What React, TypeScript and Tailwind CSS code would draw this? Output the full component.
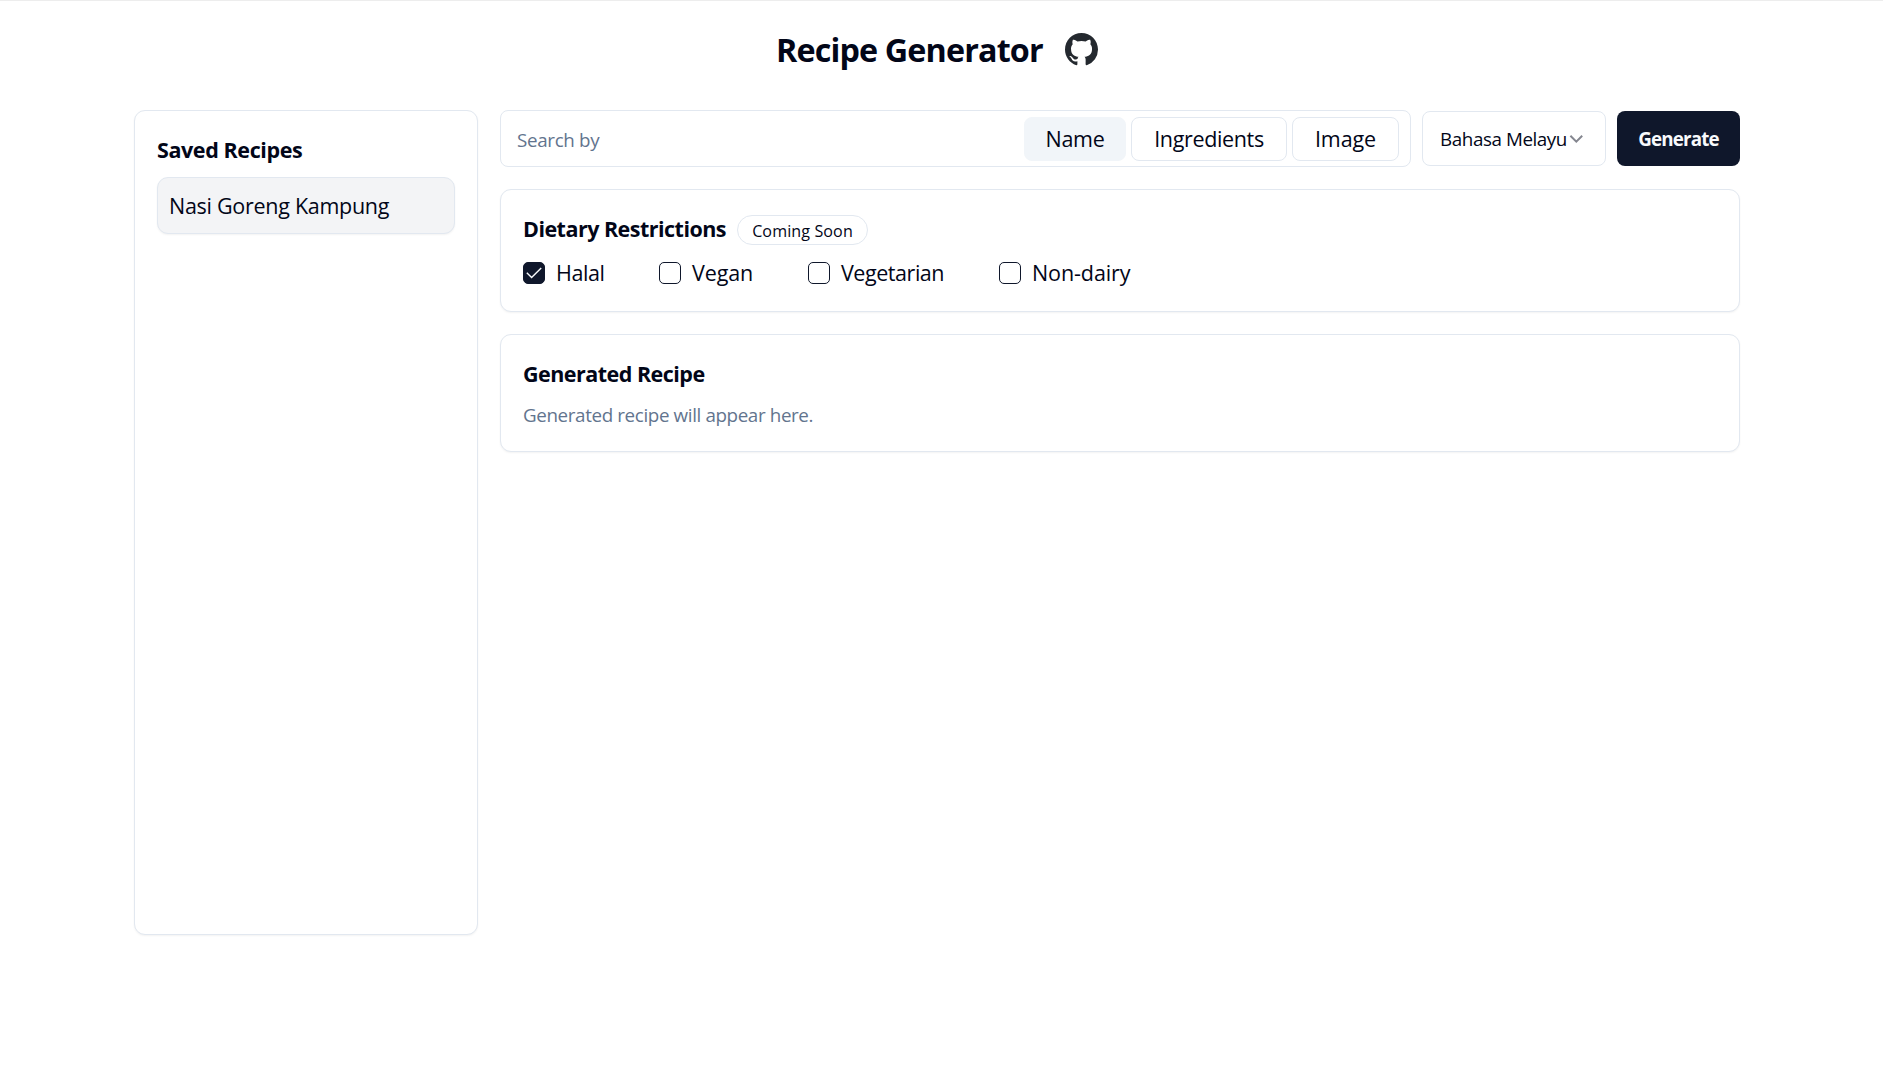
import type { ReactNode } from "react";

function GitHubMark() {
  return (
    <svg viewBox="0 0 16 16" className="h-[33px] w-[33px]" fill="#24292f" aria-label="GitHub">
      <path
        fillRule="evenodd"
        d="M8 0C3.58 0 0 3.58 0 8c0 3.54 2.29 6.53 5.47 7.59.4.07.55-.17.55-.38 0-.19-.01-.82-.01-1.49-2.01.37-2.53-.49-2.69-.94-.09-.23-.48-.94-.82-1.13-.28-.15-.68-.52-.01-.53.63-.01 1.08.58 1.23.82.72 1.21 1.87.87 2.33.66.07-.52.28-.87.51-1.07-1.78-.2-3.64-.89-3.64-3.95 0-.87.31-1.59.82-2.15-.08-.2-.36-1.02.08-2.12 0 0 .67-.21 2.2.82.64-.18 1.32-.27 2-.27s1.36.09 2 .27c1.53-1.04 2.2-.82 2.2-.82.44 1.1.16 1.92.08 2.12.51.56.82 1.27.82 2.15 0 3.07-1.87 3.75-3.65 3.95.29.25.54.73.54 1.48 0 1.07-.01 1.93-.01 2.2 0 .21.15.46.55.38A8.01 8.01 0 0 0 16 8c0-4.42-3.58-8-8-8z"
      />
    </svg>
  );
}

function Card({ className, children }: { className: string; children: ReactNode }) {
  return (
    <section className={`rounded-[11px] border border-slate-200 bg-white px-[22px] shadow-xs ${className}`}>
      {children}
    </section>
  );
}

const modes = [
  { label: "Name", className: "w-[102px] border-slate-100 bg-slate-100 tracking-[-0.27px]" },
  { label: "Ingredients", className: "w-[156px] border-slate-200 bg-white tracking-[-0.35px]" },
  { label: "Image", className: "w-[107px] border-slate-200 bg-white tracking-[-0.1px]" },
];

const diets = [
  { label: "Halal", checked: true, className: "w-[136px]", text: "tracking-[-0.4px]" },
  { label: "Vegan", checked: false, className: "w-[149px]", text: "tracking-[-0.1px]" },
  { label: "Vegetarian", checked: false, className: "w-[191px]", text: "tracking-[-0.45px]" },
  { label: "Non-dairy", checked: false, className: "w-[140px]", text: "tracking-[-0.1px]" },
];

function Checkbox({ checked }: { checked: boolean }) {
  return (
    <span
      className={`flex h-[22px] w-[22px] items-center justify-center rounded-[5px] border border-slate-900 ${
        checked ? "bg-slate-900" : "bg-white"
      }`}
    >
      {checked && (
        <svg viewBox="0 0 22 22" className="h-[22px] w-[22px] shrink-0" fill="none" stroke="#f8fafc" strokeWidth="1.4">
          <path d="M3.8 10.8 L8.6 15.6 L18.2 5.9" />
        </svg>
      )}
    </span>
  );
}

export default function App() {
  return (
    <div className="min-h-[1071px] border-t border-[#ededed] bg-white font-['Open_Sans','Noto_Sans',sans-serif] text-[21.5px] text-slate-950">
      <header className="flex h-[109px] pl-[776px]">
        <h1 className="mt-[24px] h-[48px] w-[289px] whitespace-nowrap text-[32.3px] leading-[49px] font-bold tracking-[-0.85px]">
          Recipe Generator
        </h1>
        <a className="mt-[32px] h-[33px]">
          <GitHubMark />
        </a>
      </header>

      <main className="ml-[134px] flex w-[1606px] gap-[22px]">
        <aside className="flex w-[344px] shrink-0">
          <Card className="h-[825px] w-full pt-[24px]">
            <h2 className="leading-[30px] font-bold tracking-[-0.4px]">Saved Recipes</h2>
            <div className="mt-[12px] flex h-[57px] items-center rounded-[11px] border border-slate-200 bg-gray-100 pt-[2px] pl-[11px] tracking-[-0.28px] shadow-xs">
              Nasi Goreng Kampung
            </div>
          </Card>
        </aside>

        <div className="flex min-w-0 flex-1 flex-col">
          <div className="flex h-[57px] items-center">
            <div className="flex h-[57px] w-[911px] items-center rounded-[8px] border border-slate-200 pr-[11px] pl-[16px]">
              <span className="flex-1 pt-[4px] text-[18.8px] tracking-[-0.32px] text-slate-500">Search by</span>
              <div className="flex gap-[5px]">
                {modes.map((m) => (
                  <button
                    key={m.label}
                    className={`flex h-[44px] items-center justify-center rounded-[8px] border pt-[1px] ${m.className}`}
                  >
                    {m.label}
                  </button>
                ))}
              </div>
            </div>
            <button className="ml-[11px] flex h-[55px] w-[184px] items-center rounded-[8px] border border-slate-200 pl-[16px] text-[18.8px] tracking-[-0.42px] whitespace-nowrap">
              <span className="w-[129px] pt-[2px]">Bahasa Melayu</span>
              <svg viewBox="0 0 16 16" className="h-[16px] w-[16px] shrink-0" fill="none" stroke="#84868f" strokeWidth="2">
                <path d="M2.4 4.7 L8.3 10.6 L14.2 4.7" />
              </svg>
            </button>
            <button className="ml-[11px] flex h-[55px] w-[123px] items-center justify-center rounded-[8px] bg-slate-900 pt-[2px] text-[18.8px] font-bold tracking-[-0.85px] text-slate-50">
              Generate
            </button>
          </div>

          <Card className="mt-[22px] h-[123px] pt-[25px]">
            <div className="flex h-[30px] items-center">
              <h2 className="w-[214px] pb-[3px] leading-[30px] font-bold tracking-[-0.52px] whitespace-nowrap">
                Dietary Restrictions
              </h2>
              <span className="flex h-[30px] w-[131px] items-center justify-center rounded-full border border-slate-200 pt-[3px] text-[16.1px] font-medium tracking-[0.1px] whitespace-nowrap">
                Coming Soon
              </span>
            </div>
            <div className="mt-[17px] flex h-[22px] items-center">
              {diets.map((d) => (
                <label key={d.label} className={`flex items-center gap-[11px] ${d.className}`}>
                  <Checkbox checked={d.checked} />
                  <span className={`leading-[22px] ${d.text}`}>{d.label}</span>
                </label>
              ))}
            </div>
          </Card>

          <Card className="mt-[22px] h-[118px] pt-[24px]">
            <h2 className="leading-[30px] font-bold tracking-[-0.52px]">Generated Recipe</h2>
            <p className="mt-[12px] text-[18.8px] leading-[28px] tracking-[-0.37px] text-slate-500">
              Generated recipe will appear here.
            </p>
          </Card>
        </div>
      </main>
    </div>
  );
}
